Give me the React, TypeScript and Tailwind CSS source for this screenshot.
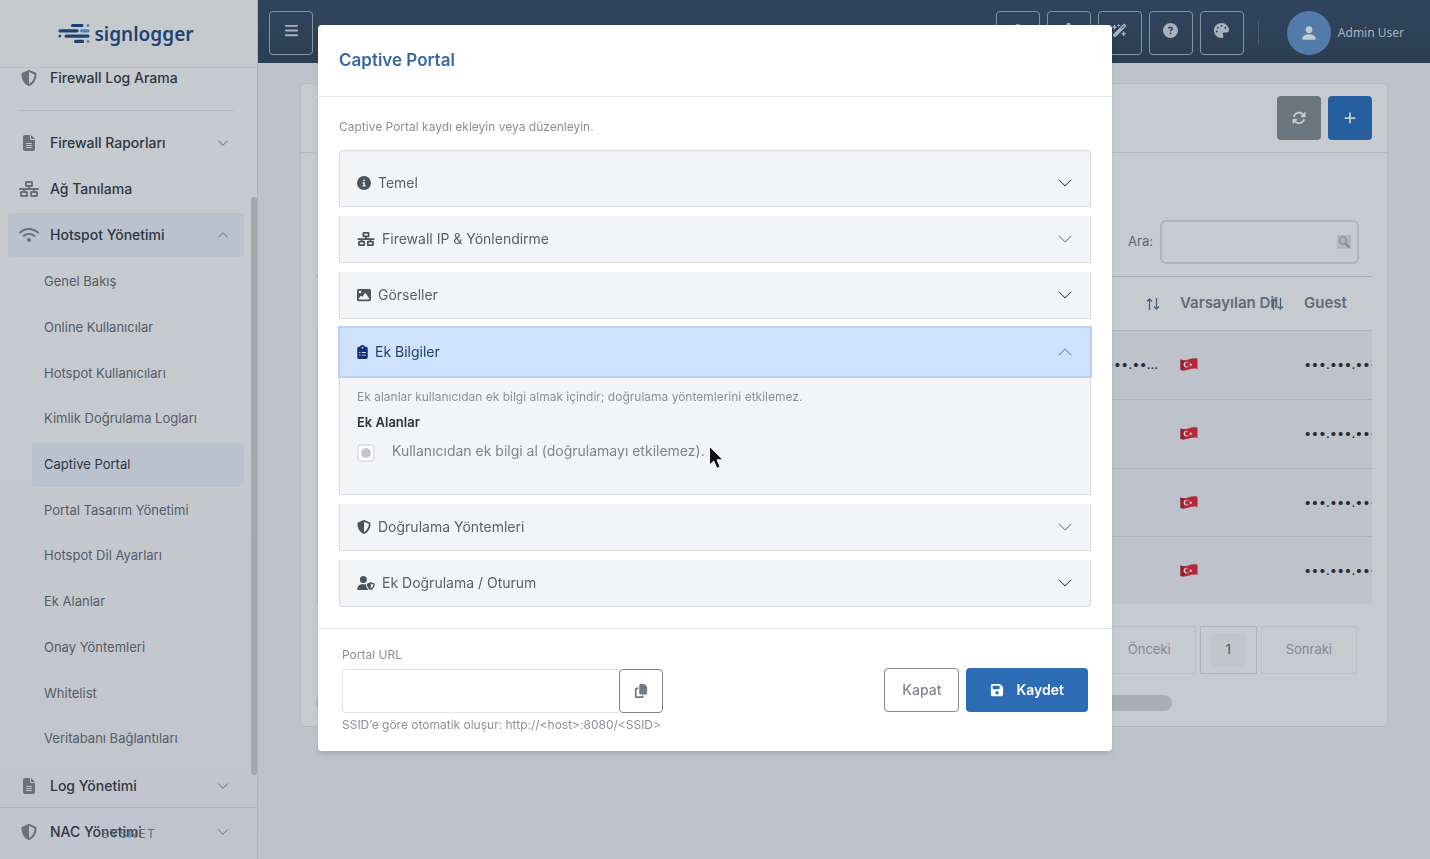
import React from 'react';
import type { IconType } from 'react-icons';
import {
    FaArrowsRotate, FaBars, FaCircleInfo, FaCircleQuestion, FaClipboardList, FaCopy, FaFileLines, FaFloppyDisk,
    FaGear, FaImage, FaMoon, FaNetworkWired, FaPalette, FaPlus, FaShieldHalved, FaUserShield, FaWandMagicSparkles, FaWifi,
} from 'react-icons/fa6';
import { BsChevronDown, BsChevronUp, BsPersonFill } from 'react-icons/bs';

const subItems = [
    'Genel Bakış', 'Online Kullanıcılar', 'Hotspot Kullanıcıları', 'Kimlik Doğrulama Logları', 'Captive Portal',
    'Portal Tasarım Yönetimi', 'Hotspot Dil Ayarları', 'Ek Alanlar', 'Onay Yöntemleri', 'Whitelist', 'Veritabanı Bağlantıları',
];

const Logo: React.FC = () => (
    <a href="#" className="flex items-center gap-1 text-[#1d4374]" aria-label="signlogger">
        <svg width="33" height="21" viewBox="0 0 33 21" fill="none" strokeWidth="3.2" strokeLinecap="round">
            <path d="M15.500 2.500H25M3 7.800H20M9 13.100H31M18.500 18.400H25.500" stroke="#1d4374" />
            <path d="M24.500 7.800H31" stroke="#4389b5" />
            <path d="M31 2.500h.01M31 18.400h.01" stroke="#4389b5" strokeWidth="2.800" />
            <path d="M2.800 13.100h.01" stroke="#1d4374" strokeWidth="2.800" />
        </svg>
        <span className="font-['Noto_Sans'] text-[19px] font-semibold leading-6">signlogger</span>
    </a>
);

const NavItem: React.FC<{ label: string; icon: IconType; wide?: boolean; chevron?: 'up' | 'down' }> = ({ label, icon: Icon, wide, chevron }) => (
    <a
        href="#"
        className={`flex h-11 items-center rounded pl-[11px] pr-[15px] text-sm font-medium text-[#30363f] ${chevron === 'up' ? 'bg-[#bac3cd]' : ''}`}
    >
        <span className="mr-[11px] flex w-5 justify-center text-[#6a717b]"><Icon className={wide ? 'h-4 w-5' : 'size-4'} /></span>
        <span className="flex-1">{label}</span>
        {chevron === 'down' && <BsChevronDown className="size-3 text-[#6a7079]" />}
        {chevron === 'up' && <BsChevronUp className="size-3 text-[#6a7079]" />}
    </a>
);

const Sidebar: React.FC = () => (
    <aside className="relative flex w-[258px] shrink-0 flex-col overflow-hidden border-r border-[#b0b5bc] bg-linear-to-b from-[#c7cbce] via-[#c6c9ce] to-[#c0c4ce]">
        <div className="z-10 flex h-[68px] shrink-0 items-center justify-center border-b border-[#b9bec3] bg-[#c6cacd] pr-1.5"><Logo /></div>
        <nav className="-mt-3 flex flex-1 flex-col gap-0.5 pl-2 pr-[13px]">
            <NavItem label="Firewall Log Arama" icon={FaShieldHalved} />
            <hr className="mx-2.5 my-2 border-[#b7bbc0]" />
            <NavItem label="Firewall Raporları" icon={FaFileLines} chevron="down" />
            <NavItem label="Ağ Tanılama" icon={FaNetworkWired} wide />
            <NavItem label="Hotspot Yönetimi" icon={FaWifi} wide chevron="up" />
            <ul className="grid h-[503px] shrink-0 auto-rows-fr pl-6 text-[13px] text-[#555c66]">
                {subItems.map((item) => (
                    <li key={item} className="py-px">
                        <a
                            href="#"
                            className={`flex h-full items-center rounded px-3 ${item === 'Captive Portal' ? 'bg-[#bac3cd] text-[#30363f]' : ''}`}
                        >
                            {item}
                        </a>
                    </li>
                ))}
            </ul>
            <NavItem label="Log Yönetimi" icon={FaFileLines} chevron="down" />
            <NavItem label="NAC Yönetimi" icon={FaShieldHalved} chevron="down" />
        </nav>
        <div className="absolute right-0 top-[197px] h-[578px] w-1.5 rounded-full bg-[#a3a7ae]" />
        <div className="absolute inset-x-0 bottom-0 flex h-[52px] items-center justify-center border-t border-[#aeb3bb] text-xs tracking-widest text-[#666d77]">
            SYSNET
        </div>
    </aside>
);

const HeaderButton: React.FC<{ icon: IconType; label: string }> = ({ icon: Icon, label }) => (
    <button type="button" aria-label={label} className="flex size-11 items-center justify-center rounded border border-[#8792a1] pb-1 text-[#a9b2bd]">
        <Icon className="size-[15px]" />
    </button>
);

const Header: React.FC = () => (
    <header className="flex h-[63px] shrink-0 items-center bg-linear-to-b from-[#30445f] to-[#2c3f51] pl-[11px] pr-[26px] pt-0.5">
        <HeaderButton icon={FaBars} label="Menü" />
        <div className="ml-auto flex gap-[7px]">
            <HeaderButton icon={FaMoon} label="Tema" />
            <HeaderButton icon={FaGear} label="Ayarlar" />
            <HeaderButton icon={FaWandMagicSparkles} label="Sihirbaz" />
            <HeaderButton icon={FaCircleQuestion} label="Yardım" />
            <HeaderButton icon={FaPalette} label="Renkler" />
        </div>
        <div className="mx-3.5 h-6 w-px bg-[#4a5a6e]" />
        <a href="#" className="ml-3.5 flex items-center gap-[7px] font-['Noto_Sans'] text-xs text-[#a9b1bc]">
            <span className="flex size-11 items-center justify-center rounded-full bg-[#527ba9] text-[#c2cad3]"><BsPersonFill className="size-[18px]" /></span>
            Admin User
        </a>
    </header>
);

const TurkishFlag: React.FC = () => (
    <svg width="18" height="13" viewBox="0 0 18 13">
        <path d="M.5 1.500C3.500 2.800 6 2 9 1.200S14.500 0 17.500.8V11c-3-.8-5.500-.4-8.500.4S3.500 12.800.5 12z" fill="#b5283a" />
        <path d="M.5 1.500C2 2.200 3.300 2.300 4.500 2.200V12.300C3.200 12.500 2 12.400.5 12z" fill="#8f2437" />
        <circle cx="6.500" cy="6.600" r="2.900" fill="#d8ccd1" />
        <circle cx="7.400" cy="6.500" r="2.300" fill="#b5283a" />
        <path d="M10.800 4.800l.5 1.100 1.200.1-.9.800.3 1.200-1.100-.6-1 .6.200-1.200-.8-.8 1.200-.1z" fill="#d8ccd1" />
    </svg>
);

const SortArrows: React.FC = () => (
    <svg className="absolute right-2.5 top-1/2 -translate-y-1/2" width="14" height="12" viewBox="0 0 14 12" fill="none" stroke="#4a6484" strokeWidth="1.300">
        <path d="M3.500 12V1M1 3.500 3.500 1 6 3.500M10.500 0v11M8 8.500l2.500 2.500L13 8.500" />
    </svg>
);

const TableCard: React.FC = () => (
    <section className="rounded border border-[#b3b7bf] bg-[#c7cacf]">
        <div className="flex h-[69px] items-center justify-end gap-[7px] border-b border-[#b5b9bf] px-[15px]">
            <button type="button" aria-label="Yenile" className="flex size-11 items-center justify-center rounded bg-[#6b757e] text-[#c8ccd0]"><FaArrowsRotate className="size-3.5" /></button>
            <button type="button" aria-label="Ekle" className="flex size-11 items-center justify-center rounded bg-[#265f9f] text-[#c8ccd0]"><FaPlus className="size-3.5" /></button>
        </div>
        <div className="px-[15px] pb-[15px] pt-[67px]">
            <div className="flex items-center justify-end gap-[7px] pr-[13px]">
                <label htmlFor="search" className="text-[13px] text-[#62676e]">Ara:</label>
                <div className="relative">
                    <input id="search" className="block h-11 w-[199px] rounded-md border-2 border-[#b0b4b9] bg-transparent px-3 text-sm" />
                    <svg className="absolute right-2 top-[15px]" width="14" height="14" viewBox="0 0 14 14" fill="none">
                        <rect width="14" height="14" fill="#b3b7bb" />
                        <circle cx="6" cy="5.500" r="3.500" stroke="#8d9196" strokeWidth="1.500" />
                        <path d="M8.500 8.500 12.500 12.500" stroke="#83878c" strokeWidth="2" />
                    </svg>
                </div>
            </div>
            <div className="mt-3 overflow-hidden">
                <table className="h-[328px] w-full table-fixed border-t border-[#a7abb1] text-left text-[13px]">
                    <thead>
                        <tr className="h-[54px] text-[15px] text-[#636b76]">
                            <th className="relative"><SortArrows /></th>
                            <th className="relative w-[124px] whitespace-nowrap pl-2.5 font-semibold">Varsayılan Dil<SortArrows /></th>
                            <th className="w-[78px] pl-2.5 font-semibold">Guest</th>
                        </tr>
                    </thead>
                    <tbody className="bg-[#bec2cb]">
                        {[0, 1, 2, 3].map((row) => (
                            <tr key={row} className="border-t border-[#adb1b9] text-[#272b33]">
                                <td className="pr-3 text-right">{row === 0 && '•••.•••.••...'}</td>
                                <td className="pl-2.5"><TurkishFlag /></td>
                                <td className="overflow-hidden pl-2.5">•••.•••.•••</td>
                            </tr>
                        ))}
                    </tbody>
                </table>
            </div>
            <div className="mt-[22px] flex h-12 justify-end gap-1 pr-[15px] text-[13px] text-[#85898f]">
                <button type="button" className="border border-[#bbbfc3] px-6">Önceki</button>
                <button type="button" className="border border-[#afb3b8] px-2.5 font-medium text-[#5d6268]">
                    <span className="flex h-[34px] w-[35px] items-center justify-center rounded bg-[#c2c6ca]">1</span>
                </button>
                <button type="button" className="border border-[#bbbfc3] px-6">Sonraki</button>
            </div>
            <div className="mr-[200px] mt-[21px] h-4 rounded-full bg-[#abafb4]" />
        </div>
    </section>
);

interface AccordionItemProps {
    title: string;
    icon: IconType;
    iconClass?: string;
    muted?: boolean;
    className?: string;
    children?: React.ReactNode;
}

const AccordionItem: React.FC<AccordionItemProps> = ({ title, icon: Icon, iconClass = 'w-3.5', muted, className = 'border-t-0', children }) => (
    <div className={`border border-[#d6d9de] bg-[#f3f4f7] ${className}`}>
        <button
            type="button"
            aria-expanded={!!children}
            className={`relative flex w-full items-center gap-[7px] px-[17px] text-sm ${children ? 'h-12 bg-[#cfe2fe] text-[#1f3f73] ring-2 ring-[#bad2f1]' : 'h-[46px] text-[#596068]'}`}
        >
            <Icon className={`h-3.5 ${iconClass} ${children ? 'text-[#0f3273]' : 'text-[#4b535c]'}`} />
            {title}
            {children ? (
                <BsChevronUp className="ml-auto size-4 text-[#6d88ad]" />
            ) : (
                <BsChevronDown className={`ml-auto size-4 ${muted ? 'text-[#7a7f86]' : 'text-[#3c4046]'}`} />
            )}
        </button>
        {children}
    </div>
);

const CaptivePortalModal: React.FC = () => (
    <div className="fixed inset-0 z-20 overflow-hidden">
        <div role="dialog" aria-label="Captive Portal" className="mx-auto mt-[25px] w-full max-w-[794px] rounded bg-white shadow-md">
            <h2 className="h-[72px] border-b border-[#e6e8ea] px-[21px] pt-[23px] text-[17px] font-semibold leading-6 text-[#37699d]">Captive Portal</h2>

            <div className="px-[21px] pb-[21px] pt-5">
                <p className="mb-[13px] text-xs leading-5 text-[#8b9096]">Captive Portal kaydı ekleyin veya düzenleyin.</p>
                <div className="flex flex-col gap-[9px]">
                    <AccordionItem title="Temel" icon={FaCircleInfo} className="rounded-t pt-[9px]" />
                    <AccordionItem title="Firewall IP & Yönlendirme" icon={FaNetworkWired} iconClass="w-[18px]" muted />
                    <AccordionItem title="Görseller" icon={FaImage} />
                    <AccordionItem title="Ek Bilgiler" icon={FaClipboardList} iconClass="w-[11px]">
                        <div className="px-[17px] pb-8 pt-3">
                            <p className="text-xs leading-[18px] text-[#8b9096]">Ek alanlar kullanıcıdan ek bilgi almak içindir; doğrulama yöntemlerini etkilemez.</p>
                            <p className="mt-[7px] text-[13px] font-semibold leading-[18px] text-[#2c323a]">Ek Alanlar</p>
                            <label className="mt-[9px] flex items-center gap-[17px] text-sm leading-5 text-[#7f848a]">
                                <input
                                    type="checkbox"
                                    className="mt-1 flex size-[18px] appearance-none items-center justify-center rounded border-2 border-[#e0e2e4] bg-white before:size-2.5 before:rounded-full before:bg-[#c4c5c7]"
                                />
                                Kullanıcıdan ek bilgi al (doğrulamayı etkilemez).
                            </label>
                        </div>
                    </AccordionItem>
                    <AccordionItem title="Doğrulama Yöntemleri" icon={FaShieldHalved} muted />
                    <AccordionItem title="Ek Doğrulama / Oturum" icon={FaUserShield} iconClass="w-[18px]" className="rounded-b border-t-0" />
                </div>
            </div>

            <div className="flex items-center justify-between border-t border-[#e6e8ea] px-6 py-[17px]">
                <div className="text-xs leading-[18px] text-[#8b9096]">
                    <label htmlFor="portal-url">Portal URL</label>
                    <div className="mb-[3px] mt-[5px] flex">
                        <input id="portal-url" readOnly className="h-11 w-[277px] rounded-l border border-r-0 border-[#e1e3e5] px-3" />
                        <button type="button" aria-label="Kopyala" className="flex size-11 items-center justify-center rounded border border-[#7d838b] text-[#737b88]"><FaCopy className="size-3.5" /></button>
                    </div>
                    <p>SSID’e göre otomatik oluşur: http://&lt;host&gt;:8080/&lt;SSID&gt;</p>
                </div>
                <div className="flex gap-[7px] text-sm font-semibold">
                    <button type="button" className="h-11 rounded border border-[#858a90] px-[17px] font-medium text-[#83888e]">Kapat</button>
                    <button type="button" className="flex h-11 items-center gap-3 rounded bg-[#2b6cb5] px-6 text-white"><FaFloppyDisk className="size-3.5" />Kaydet</button>
                </div>
            </div>
        </div>
    </div>
);

export default function App() {
    return (
        <div className="relative flex min-h-screen bg-[#bec2cb] font-['Inter',sans-serif]">
            <Sidebar />
            <div className="flex min-w-0 flex-1 flex-col">
                <Header />
                <main className="px-[42px] py-5"><TableCard /></main>
            </div>
            <CaptivePortalModal />
            {/* Mouse pointer */}
            <svg className="pointer-events-none absolute left-[708px] top-[445px] z-30" width="17" height="25" viewBox="0 0 17 25">
                <path d="M1.500 1.500V20l4.200-4 3.200 7.300 3.200-1.400L9 14.800h6z" fill="#111" stroke="#f3f4f7" strokeWidth="1" />
            </svg>
        </div>
    );
}
